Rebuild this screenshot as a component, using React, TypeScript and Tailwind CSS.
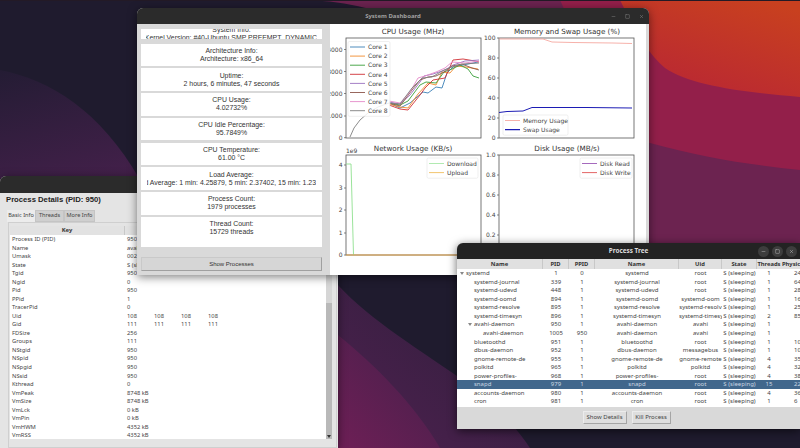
import React from 'react';
import { Minus, Square, X } from 'lucide-react';

type Pt = [number, number];

// chart traces, taken in figure coordinates
const toPoints = (pts: Pt[]) => pts.map(([x, y]) => `${x},${y}`).join(' ');

const coreSeries: { color: string; pts: Pt[] }[] = [
  { color: '#3a7fb5', pts: [[389, 103], [400, 108], [410, 103], [423, 92], [428, 93], [436, 87], [442, 88], [447, 73], [453, 67], [463, 65], [478, 62]] },
  { color: '#f08a2c', pts: [[389, 104], [400, 107], [408, 108], [418, 94], [428, 83], [436, 85], [442, 72], [450, 73], [456, 66], [466, 67], [478, 69]] },
  { color: '#3a9e3a', pts: [[389, 103], [400, 105], [408, 101], [420, 85], [426, 82], [436, 83], [444, 72], [452, 69], [460, 65], [468, 69], [473, 76], [479, 78]] },
  { color: '#d03035', pts: [[389, 105], [400, 109], [408, 110], [420, 95], [425, 88], [433, 80], [445, 78], [453, 60], [463, 59], [475, 61], [479, 62]] },
  { color: '#9a70c0', pts: [[389, 102], [400, 104], [410, 95], [420, 82], [424, 76], [433, 74], [445, 70], [453, 65], [465, 61], [479, 60]] },
  { color: '#8c564b', pts: [[389, 103], [400, 106], [412, 90], [420, 80], [428, 77], [436, 76], [444, 72], [452, 66], [462, 64], [472, 68], [479, 70]] },
  { color: '#e48ac8', pts: [[389, 101], [400, 103], [410, 92], [418, 78], [425, 76], [436, 72], [445, 68], [452, 62], [465, 63], [479, 61]] },
  { color: '#7f7f7f', pts: [[350, 137], [354, 128], [360, 120], [368, 113], [378, 107], [389, 103], [400, 104], [412, 88], [422, 78], [432, 77], [444, 70], [452, 67], [463, 64], [479, 63]] },
];

const legendColors = ['#3a7fb5', '#f08a2c', '#3a9e3a', '#d03035', '#9a70c0', '#8c564b', '#e48ac8', '#7f7f7f'];

function Axes({ x, y, title, ticks, titleX }: { x: number; y: number; title: string; titleX: number; ticks: { label: string; y: number }[] }) {
  return (
    <>
      <text x={titleX} y={y - 4} textAnchor="middle" fontSize="7.2" fill="#333">{title}</text>
      <rect x={x} y={y} width="135" height="100" fill="none" stroke="#555" strokeWidth="0.8" />
      {ticks.map((t) => (
        <g key={t.label}>
          <line x1={x - 2} x2={x} y1={t.y} y2={t.y} stroke="#555" strokeWidth="0.7" />
          <text x={x - 3.5} y={t.y + 2.2} textAnchor="end" fontSize="6" fill="#444">{t.label}</text>
        </g>
      ))}
    </>
  );
}

function Legend({ x, y, w, items }: { x: number; y: number; w: number; items: { label: string; color: string; weight?: number }[] }) {
  return (
    <g>
      <rect x={x} y={y} width={w} height={items.length * 9.1 + 2} rx="1.5" fill="#fff" fillOpacity="0.85" stroke="#e4e4e4" strokeWidth="0.6" />
      {items.map((it, i) => (
        <g key={it.label}>
          <line x1={x + 2} x2={x + 17} y1={y + 5.5 + i * 9.1} y2={y + 5.5 + i * 9.1} stroke={it.color} strokeWidth={it.weight ?? 0.9} />
          <text x={x + 20} y={y + 7.7 + i * 9.1} fontSize="6" fill="#444">{it.label}</text>
        </g>
      ))}
    </g>
  );
}

function Charts() {
  return (
    <svg className="block" width="316" height="251" viewBox="330 24 316 251" fontFamily="'DejaVu Sans', sans-serif">
      <Axes x={346} y={38} title="CPU Usage (MHz)" titleX={413} ticks={[{ label: '4000', y: 49.5 }, { label: '3000', y: 71.5 }, { label: '2000', y: 93.5 }, { label: '1000', y: 116 }, { label: '0', y: 137.7 }]} />
      {coreSeries.map((s) => (
        <polyline key={s.color} points={toPoints(s.pts)} fill="none" stroke={s.color} strokeWidth="0.9" />
      ))}
      <Legend x={348} y={41.5} w={42} items={legendColors.map((color, i) => ({ label: `Core ${i + 1}`, color }))} />

      <Axes x={499} y={38} title="Memory and Swap Usage (%)" titleX={567} ticks={[{ label: '100', y: 38 }, { label: '80', y: 58 }, { label: '60', y: 78 }, { label: '40', y: 98 }, { label: '20', y: 118 }, { label: '0', y: 138 }]} />
      <polyline points="499,39 543,39 552,42 573,42.5 613,43 632,43.5" fill="none" stroke="#f5a8a0" strokeWidth="0.9" />
      <polyline points="499,112.5 507,111.5 523,111 532,107.5 587,107.5 632,108" fill="none" stroke="#1c1cb4" strokeWidth="1" />
      <Legend x={503} y={115} w={65} items={[{ label: 'Memory Usage', color: '#f5a8a0' }, { label: 'Swap Usage', color: '#1c1cb4', weight: 1.2 }]} />

      <Axes x={346} y={155} title="Network Usage (KB/s)" titleX={413} ticks={[{ label: '4', y: 165 }, { label: '3', y: 188 }, { label: '2', y: 210 }, { label: '1', y: 233 }, { label: '0', y: 255 }]} />
      <text x={346} y={153} fontSize="6" fill="#444">1e9</text>
      <polyline points="346,164 351,164 353.5,255" fill="none" stroke="#8fe08f" strokeWidth="0.9" />
      <line x1={346} x2={481} y1={255} y2={255} stroke="#e8a13c" strokeWidth="0.9" />
      <Legend x={427} y={158} w={51} items={[{ label: 'Download', color: '#a8e8a8' }, { label: 'Upload', color: '#f0c060' }]} />

      <Axes x={499} y={155} title="Disk Usage (MB/s)" titleX={567} ticks={[{ label: '1.0', y: 155 }, { label: '0.8', y: 175 }, { label: '0.6', y: 195 }, { label: '0.4', y: 215 }, { label: '0.2', y: 235 }, { label: '0.0', y: 255 }]} />
      <Legend x={580} y={158} w={52} items={[{ label: 'Disk Read', color: '#9b59b6' }, { label: 'Disk Write', color: '#e05555' }]} />
    </svg>
  );
}

const statCards = [
  ['Architecture Info:', 'Architecture: x86_64'],
  ['Uptime:', '2 hours, 6 minutes, 47 seconds'],
  ['CPU Usage:', '4.02732%'],
  ['CPU Idle Percentage:', '95.7849%'],
  ['CPU Temperature:', '61.00 °C'],
  ['Load Average:', 'Load Average: 1 min: 4.25879, 5 min: 2.37402, 15 min: 1.23'],
  ['Process Count:', '1979 processes'],
];

function DashboardWindow() {
  return (
    <div className="absolute left-[137px] top-[8px] flex h-[267px] w-[512px] flex-col overflow-hidden rounded-t-[6px] bg-[#d9d9d9] shadow-[0_2px_10px_rgba(0,0,0,0.5)]">
      <div className="relative flex h-[16px] shrink-0 items-center justify-center bg-[#2b2b2b] text-[6px] font-bold text-[#a0a0a0]">
        System Dashboard
        <div className="absolute right-[5px] top-0 flex h-full items-center gap-[9px] text-[#8d8d8d]">
          <Minus size={5} />
          <Square size={5} />
          <X size={5} />
        </div>
      </div>
      <div className="flex min-h-0 flex-1">
        <div className="flex w-[193px] shrink-0 flex-col gap-[2.25px] pl-[4px] pr-[8px] pt-[5px] font-['Liberation_Sans',sans-serif] text-[6.9px] leading-[8px] text-[#333]">
          <div className="mb-[2px] flex h-[10.3px] shrink-0 flex-col justify-end overflow-hidden bg-white px-[5px]">
            <div className="mb-[-3px] flex shrink-0 flex-col items-end overflow-hidden text-center">
              <p className="w-full whitespace-nowrap">System Info:</p>
              <p className="shrink-0 whitespace-nowrap">Kernel Version: #40-Ubuntu SMP PREEMPT_DYNAMIC</p>
            </div>
          </div>
          {statCards.map(([label, value]) => (
            <div key={label} className="flex h-[22.5px] shrink-0 flex-col items-center justify-center overflow-hidden bg-white px-[6px]">
              <p className="whitespace-nowrap">{label}</p>
              {/* the long load line keeps its end and loses its start */}
              <div className={label === 'Load Average:' ? 'flex w-full justify-end overflow-hidden' : 'flex w-full justify-center overflow-hidden'}>
                <p className="shrink-0 whitespace-nowrap">{value}</p>
              </div>
            </div>
          ))}
          <div className="flex h-[30px] shrink-0 flex-col items-center overflow-hidden bg-white pt-[3px]">
            <p>Thread Count:</p>
            <p>15729 threads</p>
          </div>
          <button className="mt-[8px] flex h-[14px] shrink-0 items-center justify-center border border-[#c9c9c9] border-b-[#a0a0a0] border-r-[#a0a0a0] bg-[#d6d6d6] text-[6px] text-[#333]">
            Show Processes
          </button>
        </div>
        <div className="min-w-0 flex-1 bg-white">
          <Charts />
        </div>
        <div className="w-[3px] shrink-0" />
      </div>
    </div>
  );
}

const detailRows: [string, string, ...string[]][] = [
  ['Process ID (PID)', '950'],
  ['Name', 'avahi-daemon'],
  ['Umask', '0022'],
  ['State', 'S (sleeping)'],
  ['Tgid', '950'],
  ['Ngid', '0'],
  ['Pid', '950'],
  ['PPid', '1'],
  ['TracerPid', '0'],
  ['Uid', '108', '108', '108', '108'],
  ['Gid', '111', '111', '111', '111'],
  ['FDSize', '256'],
  ['Groups', '111'],
  ['NStgid', '950'],
  ['NSpid', '950'],
  ['NSpgid', '950'],
  ['NSsid', '950'],
  ['Kthread', '0'],
  ['VmPeak', '8748 kB'],
  ['VmSize', '8748 kB'],
  ['VmLck', '0 kB'],
  ['VmPin', '0 kB'],
  ['VmHWM', '4352 kB'],
  ['VmRSS', '4352 kB'],
];

function DetailsWindow() {
  return (
    <div className="absolute left-0 top-[176px] flex h-[272px] w-[338px] flex-col overflow-hidden rounded-t-[6px] bg-[#e4e4e4] font-['Noto_Sans',sans-serif] text-[5.8px] text-[#444] shadow-[0_2px_10px_rgba(0,0,0,0.5)]">
      <div className="h-[17px] shrink-0 bg-[#2b2b2b]" />
      <h2 className="ml-[6px] h-[15px] font-['Liberation_Sans',sans-serif] text-[7.7px] font-bold leading-[14px] text-[#222]">Process Details (PID: 950)</h2>
      <div className="ml-[7px] mt-[2px] flex h-[12px] shrink-0 text-[5.6px] leading-[11px]">
        <span className="w-[28px] bg-[#ececec] text-center">Basic Info</span>
        <span className="w-[29px] border border-[#c4c4c4] bg-[#cfcfcf] text-center leading-[9px]">Threads</span>
        <span className="w-[31px] border border-[#c4c4c4] bg-[#cfcfcf] text-center leading-[9px]">More Info</span>
      </div>
      <div className="ml-[8px] flex min-h-0 w-[329px] flex-1 flex-col border border-[#cfcfcf] pb-[8px] pl-[1px] pr-[4px] pt-[3px]">
        <div className="grid h-[9px] shrink-0 grid-cols-[115px_1fr] bg-[#e2e2e2] font-bold leading-[9px] text-[#333]">
          <span className="border-r border-[#c8c8c8] text-center">Key</span>
          <span />
        </div>
        <div className="relative min-h-0 flex-1 overflow-hidden bg-white leading-[8.54px]">
          {detailRows.map(([key, ...values]) => (
            <div key={key} className="grid h-[8.54px] grid-cols-[117px_27px_27px_27px_27px]">
              <span className="whitespace-nowrap pl-[2px]">{key}</span>
              {values.map((v, i) => (
                <span key={i} className="whitespace-nowrap">{v}</span>
              ))}
            </div>
          ))}
          <div className="absolute bottom-0 right-0 top-0 flex w-[6px] flex-col bg-[#b9b9b9]">
            <div className="h-[68px] bg-[#d6d6d6]" />
            <div className="flex-1" />
            <div className="mb-[1px] ml-[1px] h-0 w-0 border-x-[2px] border-t-[3px] border-x-transparent border-t-[#333]" />
          </div>
        </div>
      </div>
    </div>
  );
}

type TreeRow = { name: string; indent: number; arrow?: boolean; pid: string; ppid: string; title: string; uid: string; threads: string; phys: string; selected?: boolean };

const treeRows: TreeRow[] = [
  { name: 'systemd', indent: 9, arrow: true, pid: '1', ppid: '0', title: 'systemd', uid: 'root', threads: '1', phys: '24' },
  { name: 'systemd-journal', indent: 17, pid: '339', ppid: '1', title: 'systemd-journal', uid: 'root', threads: '1', phys: '64' },
  { name: 'systemd-udevd', indent: 17, pid: '448', ppid: '1', title: 'systemd-udevd', uid: 'root', threads: '1', phys: '28' },
  { name: 'systemd-oomd', indent: 17, pid: '894', ppid: '1', title: 'systemd-oomd', uid: 'systemd-oom', threads: '1', phys: '16' },
  { name: 'systemd-resolve', indent: 17, pid: '895', ppid: '1', title: 'systemd-resolve', uid: 'systemd-resolv', threads: '1', phys: '25' },
  { name: 'systemd-timesyn', indent: 17, pid: '896', ppid: '1', title: 'systemd-timesyn', uid: 'systemd-timesy', threads: '2', phys: '85' },
  { name: 'avahi-daemon', indent: 17, arrow: true, pid: '950', ppid: '1', title: 'avahi-daemon', uid: 'avahi', threads: '1', phys: '' },
  { name: 'avahi-daemon', indent: 26, pid: '1005', ppid: '950', title: 'avahi-daemon', uid: 'avahi', threads: '1', phys: '' },
  { name: 'bluetoothd', indent: 17, pid: '951', ppid: '1', title: 'bluetoothd', uid: 'root', threads: '1', phys: '10' },
  { name: 'dbus-daemon', indent: 17, pid: '952', ppid: '1', title: 'dbus-daemon', uid: 'messagebus', threads: '1', phys: '10' },
  { name: 'gnome-remote-de', indent: 17, pid: '955', ppid: '1', title: 'gnome-remote-de', uid: 'gnome-remote', threads: '4', phys: '35' },
  { name: 'polkitd', indent: 17, pid: '965', ppid: '1', title: 'polkitd', uid: 'polkitd', threads: '4', phys: '32' },
  { name: 'power-profiles-', indent: 17, pid: '968', ppid: '1', title: 'power-profiles-', uid: 'root', threads: '4', phys: '38' },
  { name: 'snapd', indent: 17, pid: '979', ppid: '1', title: 'snapd', uid: 'root', threads: '15', phys: '22', selected: true },
  { name: 'accounts-daemon', indent: 17, pid: '980', ppid: '1', title: 'accounts-daemon', uid: 'root', threads: '4', phys: '36' },
  { name: 'cron', indent: 17, pid: '981', ppid: '1', title: 'cron', uid: 'root', threads: '1', phys: '6' },
];

const treeGrid = 'grid grid-cols-[86px_26px_26px_84px_43px_35px_24px_40px]';

function TreeWindow() {
  return (
    <div className="absolute left-[457px] top-[243px] flex h-[186px] w-[343px] flex-col overflow-hidden rounded-tl-[6px] bg-[#d9d9d9] font-['Noto_Sans',sans-serif] text-[6px] text-[#444] shadow-[0_2px_10px_rgba(0,0,0,0.6)]">
      <div className="relative flex h-[16px] shrink-0 items-center justify-center bg-[#232323] text-[6.4px] font-bold text-[#ddd]">
        Process Tree
        <div className="absolute right-[3px] top-[3px] flex gap-[3px] text-[#ccc]">
          {[Minus, Square, X].map((Icon, i) => (
            <span key={i} className="flex h-[11px] w-[11px] items-center justify-center rounded-full bg-[#3d3d3d]">
              <Icon size={5} />
            </span>
          ))}
        </div>
      </div>
      <div className={`${treeGrid} h-[10px] shrink-0 bg-[#e0e0e0] text-[5.8px] font-bold leading-[10px] text-[#333]`}>
        {['Name', 'PID', 'PPID', 'Name', 'Uid', 'State'].map((h, i) => (
          <span key={i} className="border-r border-[#c8c8c8] text-center">{h}</span>
        ))}
        <span className="whitespace-nowrap text-center">Threads</span>
        <span className="whitespace-nowrap pl-[1px]">Physical</span>
      </div>
      <div className="h-[138px] shrink-0 overflow-hidden bg-white leading-[8.57px]">
        {treeRows.map((r) => (
          <div key={r.pid} className={`${treeGrid} h-[8.57px] ${r.selected ? 'bg-[#41678c] text-[#c9d6e2]' : ''}`}>
            <span className="relative whitespace-nowrap" style={{ paddingLeft: r.indent }}>
              {r.arrow && <span className="absolute top-[3px] h-0 w-0 border-x-[2.5px] border-t-[3px] border-x-transparent border-t-[#888]" style={{ left: r.indent - 6 }} />}
              {r.name}
            </span>
            <span className="text-center">{r.pid}</span>
            <span className="text-center">{r.ppid}</span>
            <span className="whitespace-nowrap text-center">{r.title}</span>
            <span className="overflow-hidden whitespace-nowrap text-center">{r.uid}</span>
            <span className="whitespace-nowrap text-center">S (sleeping)</span>
            <span className="text-center">{r.threads}</span>
            <span className="pl-[13px]">{r.phys}</span>
          </div>
        ))}
      </div>
      <div className="flex flex-1 items-center justify-center gap-[5px] pb-[1px] pr-[4px]">
        <button className="h-[13px] w-[44px] border border-[#ececec] border-b-[#a5a5a5] border-r-[#a5a5a5] bg-[#dedede] text-[6px] text-[#444]">Show Details</button>
        <button className="h-[13px] w-[39px] border border-[#ececec] border-b-[#a5a5a5] border-r-[#a5a5a5] bg-[#dedede] text-[6px] text-[#444]">Kill Process</button>
      </div>
    </div>
  );
}

function Wallpaper() {
  return (
    <svg className="absolute inset-0" width="800" height="448" viewBox="0 0 800 448">
      <defs>
        <linearGradient id="leftBand" x1="0" y1="0" x2="0.3" y2="1">
          <stop offset="0" stopColor="#241c34" />
          <stop offset="1" stopColor="#43204a" />
        </linearGradient>
        <linearGradient id="midBand" x1="1" y1="0" x2="0" y2="1">
          <stop offset="0" stopColor="#2e1e3a" />
          <stop offset="1" stopColor="#4e2150" />
        </linearGradient>
        <linearGradient id="hotBand" x1="1" y1="0" x2="0" y2="1">
          <stop offset="0" stopColor="#43204a" />
          <stop offset="1" stopColor="#6e1f56" />
        </linearGradient>
        <linearGradient id="sky" x1="0.2" y1="1" x2="0.8" y2="0">
          <stop offset="0" stopColor="#b82535" />
          <stop offset="1" stopColor="#c8401f" />
        </linearGradient>
      </defs>
      <rect width="800" height="448" fill="#1f1b2e" />
      <path d="M0 70 C50 80 100 110 140 180 L140 200 L0 200 Z" fill="url(#leftBand)" />
      <path d="M338 285 C370 320 420 350 470 385 C495 405 515 425 530 448 L338 448 Z" fill="url(#midBand)" />
      <path d="M338 335 C375 365 415 405 440 448 L338 448 Z" fill="url(#hotBand)" />
      <path d="M300 0 C450 0 560 120 650 245 L800 245 L800 0 Z" fill="#6c2350" />
      <path d="M560 0 C600 90 630 135 650 143 C700 157 750 165 800 170 L800 0 Z" fill="#931f4a" />
      <path d="M620 0 C640 40 650 55 665 68 C690 85 740 92 800 97 L800 0 Z" fill="url(#sky)" />
      <rect width="800" height="1" fill="#231a26" />
    </svg>
  );
}

export default function App() {
  return (
    <div className="relative h-[448px] w-[800px] overflow-hidden bg-[#1f1b2e]">
      <Wallpaper />
      <DetailsWindow />
      <DashboardWindow />
      <TreeWindow />
    </div>
  );
}
